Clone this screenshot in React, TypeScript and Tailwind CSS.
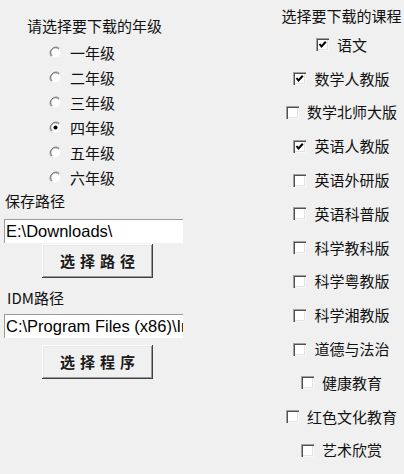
const grades = ["一年级", "二年级", "三年级", "四年级", "五年级", "六年级"]

const courses = [
  { name: "语文", checked: true },
  { name: "数学人教版", checked: true },
  { name: "数学北师大版", checked: false },
  { name: "英语人教版", checked: true },
  { name: "英语外研版", checked: false },
  { name: "英语科普版", checked: false },
  { name: "科学教科版", checked: false },
  { name: "科学粤教版", checked: false },
  { name: "科学湘教版", checked: false },
  { name: "道德与法治", checked: false },
  { name: "健康教育", checked: false },
  { name: "红色文化教育", checked: false },
  { name: "艺术欣赏", checked: false },
]

const cjk = "font-['Noto_Sans_CJK_SC',sans-serif]"

function Radio({ on }: { on: boolean }) {
  return (
    <svg width="13" height="13" viewBox="0 0 13 13" className="shrink-0">
      <circle cx="6.5" cy="6.5" r="6" fill="#fff" />
      <path d="M2.3 10.7 A6 6 0 0 1 10.7 2.3" fill="none" stroke="#a0a0a0" strokeWidth="1" />
      <path d="M3.1 9.9 A4.8 4.8 0 0 1 9.9 3.1" fill="none" stroke="#606060" strokeWidth="1" />
      <path d="M10.7 2.3 A6 6 0 0 1 2.3 10.7" fill="none" stroke="#e8e8e8" strokeWidth="1" />
      {on && <circle cx="6.5" cy="6.5" r="2" fill="#000" />}
    </svg>
  )
}

function Check({ on }: { on: boolean }) {
  return (
    <div className="relative h-[13px] w-[13px] shrink-0 bg-white shadow-[inset_1px_1px_0_#a0a0a0,inset_2px_2px_0_#505050,inset_-1px_-1px_0_#f8f8f8,inset_-2px_-2px_0_#e3e3e3]">
      {on && (
        <svg width="13" height="13" viewBox="0 0 13 13" className="absolute left-0 top-0">
          <polyline points="3.5,6 5.5,8.5 9.8,3.8" fill="none" stroke="#000" strokeWidth="2" />
        </svg>
      )}
    </div>
  )
}

function Button({ label }: { label: string }) {
  return (
    <button className="ml-[38px] flex h-[34px] w-[111px] items-center justify-center bg-[#f0f0f0] pl-[5px] shadow-[inset_-1px_-1px_0_#404040,inset_1px_1px_0_#ffffff,inset_-2px_-2px_0_#9a9a9a,inset_2px_2px_0_#e8e8e8]">
      <span className={`${cjk} text-[15px] font-bold tracking-[5px] text-[#1a1a1a]`}>{label}</span>
    </button>
  )
}

function PathInput({ value }: { value: string }) {
  return (
    <input
      readOnly
      value={value}
      className="h-6 w-[179px] border-l border-t border-[#9a9a9a] bg-white pl-[1px] font-['Liberation_Sans',sans-serif] text-[16.5px] text-black outline-none"
    />
  )
}

export default function App() {
  return (
    <div className={`flex h-[474px] w-[404px] bg-[#f0f0f0] text-[#111] ${cjk}`}>
      <div className="flex w-[279px] flex-col pl-[4px]">
        <div className="ml-[23px] mt-4 h-5 text-[15px] leading-5">请选择要下载的年级</div>
        <div className="mt-1 flex flex-col">
          {grades.map((g, i) => (
            <div key={g} className="flex h-[25px] items-center gap-[8px] pl-[45px]">
              <Radio on={i === 3} />
              <span className="text-[15px] leading-5">{g}</span>
            </div>
          ))}
        </div>
        <div className="ml-[1px] mt-[1px] h-5 text-[15px] leading-5">保存路径</div>
        <div className="mt-[7px]">
          <PathInput value="E:\Downloads\" />
        </div>
        <div className="mt-[1px]">
          <Button label="选择路径" />
        </div>
        <div className="ml-[3px] mt-[10px] h-5 text-[15px] leading-5">IDM路径</div>
        <div className="mt-[5px]">
          <PathInput value="C:\Program Files (x86)\Internet Download Manager\IDMan.exe" />
        </div>
        <div className="mt-[7px]">
          <Button label="选择程序" />
        </div>
      </div>
      <div className="flex flex-1 flex-col items-center">
        <div className="mt-[6px] h-5 whitespace-nowrap text-[15px] leading-5">选择要下载的课程</div>
        <div className="mt-[2px] flex flex-col items-center">
          {courses.map((c) => (
            <div key={c.name} className="flex h-[33.8px] items-center gap-2">
              <Check on={c.checked} />
              <span className="whitespace-nowrap text-[15px] leading-5">{c.name}</span>
            </div>
          ))}
        </div>
      </div>
    </div>
  )
}
